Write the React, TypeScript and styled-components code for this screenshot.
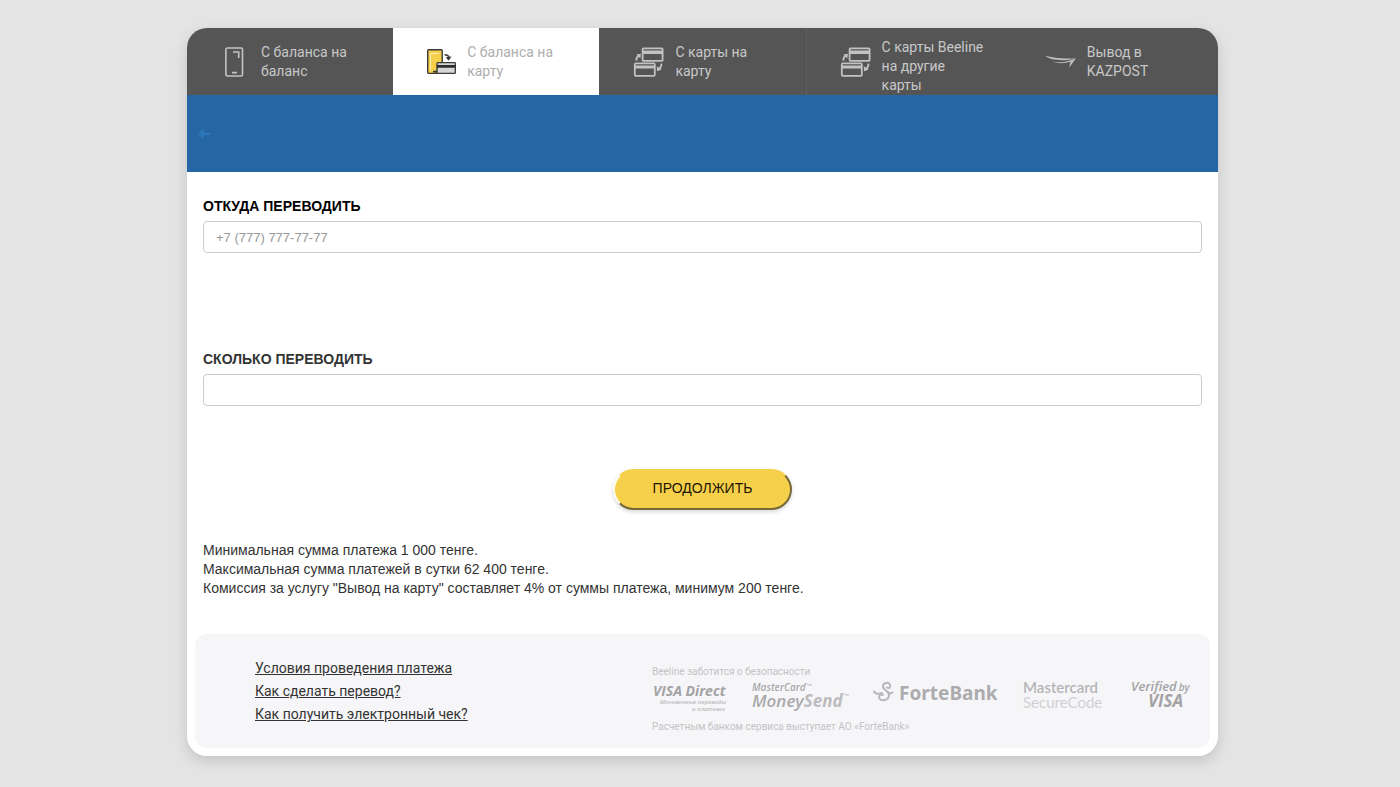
import React from "react";
import styled, { createGlobalStyle } from "styled-components";

const GlobalStyle = createGlobalStyle`
  *, *::before, *::after { box-sizing: border-box; }
  body { margin: 0; background: #e4e4e4; color: #333; font: 14px/19px "Liberation Sans", sans-serif; }
`;

const Page = styled.main`
  padding: 28px 13% 31px;
  padding-left: 187px;
`;

const Card = styled.section`
  background: #fff;
  border-radius: 20px;
  overflow: hidden;
  box-shadow: 0 5px 14px rgba(0, 0, 0, 0.14);
`;

const Tabs = styled.nav`
  display: grid;
  grid-template-columns: repeat(5, 1fr);
  height: 67px;
  background: #555;
`;

const Tab = styled.a<{ $active?: boolean; $divided?: boolean }>`
  display: flex;
  align-items: center;
  gap: 11px;
  padding-left: 32px;
  border-left: 1px solid ${(p) => (p.$divided ? "#606060" : "transparent")};
  background: ${(p) => (p.$active ? "#fff" : "transparent")};
  color: ${(p) => (p.$active ? "#adadad" : "#c8c8c8")};
  font: 14px/19px Roboto, sans-serif;
  text-decoration: none;
  svg { flex: none; }
`;

const TabLabel = styled.span<{ $width: number }>`
  width: ${(p) => p.$width}px;
  max-height: 48px;
`;

const Banner = styled.div`
  display: flex;
  align-items: center;
  height: 77px;
  padding-left: 10px;
  background: #2766a4;
`;

const BackButton = styled.button`
  display: flex;
  padding: 0;
  border: 0;
  background: none;
  color: #2b75b9;
`;

const Form = styled.form`
  padding: 24px 16px 36px;
`;

const Field = styled.div`
  display: flex;
  flex-direction: column;
  gap: 5px;
  & + & { margin-top: 96px; }
`;

const Label = styled.label<{ $strong?: boolean }>`
  font-weight: 700;
  line-height: 20px;
  color: ${(p) => (p.$strong ? "#000" : "#333")};
`;

const Input = styled.input`
  width: 100%;
  height: 32px;
  padding: 0 12px;
  border: 1px solid #ccc;
  border-radius: 4px;
  background: #fff;
  font: 13px/19px "Liberation Sans", sans-serif;
  &::placeholder { color: #999; opacity: 1; }
`;

const Submit = styled.button`
  display: block;
  width: 179px;
  height: 41px;
  margin: 63px auto 31px;
  padding: 0 0 2px;
  border: 2px solid;
  border-color: #f6d04a #75693a #75693a #fffbea;
  border-radius: 21px;
  background: #f6d04a;
  box-shadow: 0 2px 4px rgba(0, 0, 0, 0.15);
  color: #1d1600;
  font: inherit;
`;

const Terms = styled.p`
  margin: 0;
`;

const Footer = styled.footer`
  display: grid;
  grid-template-columns: 397px 1fr;
  margin: 0 8px 8px;
  padding: 23px 18px 13px 60px;
  height: 114px;
  border-radius: 12px;
  background: #f6f6f8;
`;

const Links = styled.div`
  display: flex;
  flex-direction: column;
  align-items: flex-start;
`;

const FooterLink = styled.a`
  color: #333;
  font: 14px/23px Roboto, sans-serif;
`;

const Security = styled.div`
  display: flex;
  flex-direction: column;
  padding-top: 9px;
`;

const Note = styled.small`
  color: #c3c3c5;
  font: 10px/12px Roboto, sans-serif;
`;

const Logos = styled.div`
  display: flex;
  justify-content: space-between;
  align-items: flex-start;
  height: 43px;
  padding-top: 2px;
`;

const Logo = styled.svg`
  display: block;
  overflow: visible;
  font-family: "Open Sans", sans-serif;
`;

const PhoneIcon = () => (
  <svg width="30" height="32" viewBox="0 0 30 32" fill="none" stroke="#c4c4c4" strokeWidth="1.6">
    <rect x="5.9" y="2" width="16.6" height="28" rx="1.5" />
    <path d="M13 6H18.700V12M12 26.600h5" />
  </svg>
);

const PhoneCardIcon = () => (
  <svg width="30" height="32" viewBox="0 0 30 32" fill="none">
    <rect x="1.7" y="3.8" width="14.5" height="23.6" rx="1" fill="#f6cf4c" stroke="#3a3a3a" strokeWidth="1.4" />
    <path d="M4.500 24V7.500H12.500" stroke="#fff0b5" strokeWidth="1" />
    <path d="M7 25.600h4" stroke="#3a3a3a" strokeWidth="1.6" />
    <rect x="11" y="16.600" width="18.4" height="10.8" rx="1" fill="#d6d6d6" stroke="#3a3a3a" strokeWidth="1.4" />
    <path d="M11 20.400h18.400" stroke="#2e2e2e" strokeWidth="2.6" />
    <path d="M18.500 8.800c3 0 4.500 1.300 4.700 3.800" stroke="#3a3a3a" strokeWidth="1.5" />
    <path d="M19.800 11.200l2.800 3.600 3-4.200z" fill="#3a3a3a" />
  </svg>
);

const CardsIcon = () => (
  <svg width="32" height="32" viewBox="-2 0 32 32" fill="none" stroke="#c2c2c2" strokeWidth="1.8">
    <rect x="8.600" y="2.300" width="20" height="12.6" rx="1" />
    <path d="M8.600 6.200h20" strokeWidth="3.4" />
    <rect x="0.8" y="17.400" width="20" height="12.400" rx="1" />
    <path d="M0.800 21h20" strokeWidth="2.800" />
    <path d="M2.400 14.600C2.200 12 3 10.500 5 9.500M27.400 17.600C27.600 20 26.500 22 25 23" />
    <path d="M2.300 8.400l4.600-.6-.6 4.800zM22.800 20.200l.2 5 4.800-1.600z" fill="#c2c2c2" stroke="none" />
  </svg>
);

const PostIcon = () => (
  <svg width="31" height="32" viewBox="0 0 32 32" fill="#bdbdbd">
    <path d="M0 9.600C9 11.600 19 13.200 32 12C23 15 7 15.400 0 9.600z" />
    <path d="M8 15.800C14 18 21 17.200 26.200 15.800L25 21.800L32 12L27.800 13.600C22 16 15 17 8 15.800z" />
  </svg>
);

const tabs = [
  { label: "С баланса на баланс", width: 95, icon: <PhoneIcon /> },
  { label: "С баланса на карту", width: 95, icon: <PhoneCardIcon />, active: true },
  { label: "С карты на карту", width: 95, icon: <CardsIcon /> },
  { label: "С карты Beeline на другие карты", width: 104, icon: <CardsIcon />, divided: true },
  { label: "Вывод в KAZPOST", width: 95, icon: <PostIcon /> },
];

const links = ["Условия проведения платежа", "Как сделать перевод?", "Как получить электронный чек?"];

export default function App() {
  return (
    <>
      <GlobalStyle />
      <Page>
        <Card>
          <Tabs>
            {tabs.map((t) => (
              <Tab key={t.label} href="#" $active={t.active} $divided={t.divided}>
                {t.icon}
                <TabLabel $width={t.width}>{t.label}</TabLabel>
              </Tab>
            ))}
          </Tabs>
          <Banner>
            <BackButton type="button" aria-label="Назад">
              <svg width="14" height="12" viewBox="0 0 14 12" fill="currentColor">
                <path d="M0.5 6L6 0.8L7.500 4.600L13.500 5V7L7.500 7.400L6 11.200z" />
              </svg>
            </BackButton>
          </Banner>
          <Form>
            <Field>
              <Label htmlFor="from" $strong>ОТКУДА ПЕРЕВОДИТЬ</Label>
              <Input id="from" type="tel" placeholder="+7 (777) 777-77-77" />
            </Field>
            <Field>
              <Label htmlFor="amount">СКОЛЬКО ПЕРЕВОДИТЬ</Label>
              <Input id="amount" type="text" />
            </Field>
            <Submit type="button">ПРОДОЛЖИТЬ</Submit>
            <Terms>Минимальная сумма платежа 1 000 тенге.</Terms>
            <Terms>Максимальная сумма платежей в сутки 62 400 тенге.</Terms>
            <Terms>Комиссия за услугу "Вывод на карту" составляет 4% от суммы платежа, минимум 200 тенге.</Terms>
          </Form>
          <Footer>
            <Links>
              {links.map((l) => (
                <FooterLink key={l} href="#">{l}</FooterLink>
              ))}
            </Links>
            <Security>
              <Note>Beeline заботится о безопасности</Note>
              <Logos>
                <Logo width="75" height="36" fill="#a3a3a5" fontStyle="italic">
                  <text x="1" y="16" fontSize="14" fontWeight="700">VISA Direct</text>
                  <text x="74" y="24" fontSize="6" fontWeight="600" textAnchor="end" fill="#bdbdbf">Мгновенные переводы</text>
                  <text x="73" y="31" fontSize="6" fontWeight="600" textAnchor="end" fill="#bdbdbf">и платежи</text>
                </Logo>
                <Logo width="96" height="36" fill="#a9a9ab" fontStyle="italic">
                  <text x="0" y="11" fontSize="10" fontWeight="600">MasterCard</text>
                  <text x="0" y="27" fontSize="17" fontWeight="600">Money<tspan fontWeight="700" fill="#bcbcbe">Send</tspan></text>
                  <path d="M54 4h2M57 6V4l1 1 1-1v2M91 14h2M94 16v-2l1 1 1-1v2" fill="none" stroke="#c6c6c8" strokeWidth="1" />
                </Logo>
                <Logo width="125" height="36" fill="#acacae">
                  <g fill="none" stroke="#b8b8ba" strokeWidth="2" strokeLinecap="round">
                    <path d="M14 7.500c2.500 1.500 4.500-1.500 2.500-3.500c-2.500-2.500-7-.5-6.500 3c.5 3.500 6.500 3.500 6 8.500c-.5 5-7.500 6-9.500 3c-1.500-3 1.500-5 3.500-3.500" />
                    <path d="M1 11.500c1.500 3 5 2.500 8 1.500M14.500 12c2 1.500 3.500 1.500 5 .5" />
                  </g>
                  <text x="26" y="20" fontSize="19" fontWeight="700" fontFamily="Noto Sans">ForteBank</text>
                </Logo>
                <Logo width="83" height="36" fill="#b4b4b6">
                  <text x="0" y="13" fontSize="15" fontWeight="600" fontFamily="Lato">Mastercard</text>
                  <text x="0" y="28" fontSize="15" fill="#d0d0d2" fontFamily="Lato">SecureCode</text>
                </Logo>
                <Logo width="61" height="36" fill="#a3a3a5" fontStyle="italic">
                  <text x="0" y="11" fontSize="13" fontWeight="600">Verified<tspan fontSize="10" dx="2">by</tspan></text>
                  <text x="17" y="27" fontSize="17" fontWeight="700">VISA</text>
                </Logo>
              </Logos>
              <Note>Расчетным банком сервиса выступает АО «ForteBank»</Note>
            </Security>
          </Footer>
        </Card>
      </Page>
    </>
  );
}
